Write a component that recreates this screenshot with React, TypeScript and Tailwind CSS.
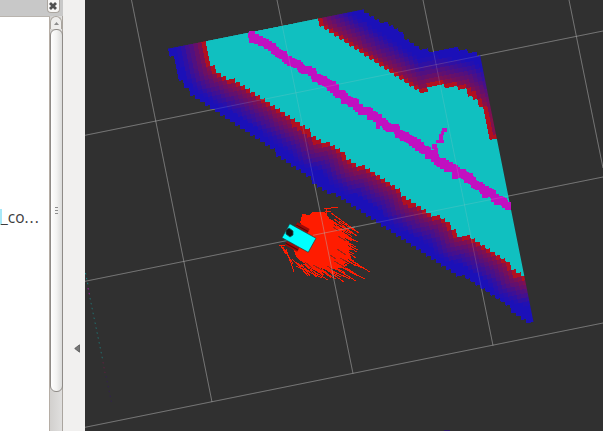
import React from "react";

type Pt = [number, number];

const CELL = 4.25;
const ANGLE = -11.35;
const RAD = (ANGLE * Math.PI) / 180;
const COS = Math.cos(RAD);
const SIN = Math.sin(RAD);
const ORIGIN: Pt = [168, 48.5];

const parse = (s: string): Pt[] => s.split(" ").map((p) => p.split(",").map(Number) as Pt);

const outer = parse(
  "167,48 172,56 175,67 180,80 192,95 210,108 223,117 270,148 283,160 303,173 320,187 340,198 373,220 400,238 417,250 433,260 453,273 470,279 487,290 507,303 513,313 525,321 535,324 482,55 475,53 457,48 447,50 433,52 422,50 413,43 400,33 383,22 369,13 360,8"
);
const free = parse(
  "205,38 208,55 213,67 220,73 232,80 247,88 260,97 270,104 287,116 300,125 310,132 317,141 332,144 342,152 348,160 358,167 367,167 380,177 400,190 407,200 427,212 442,218 451,226 458,235 470,237 490,250 507,262 515,272 525,277 499,139 487,137 489,128 488,120 482,107 473,97 463,89 442,85 430,87 423,94 407,84 392,74 370,60 350,46 330,33 312,17"
);
const path = parse(
  "251,37 263,43 277,50 287,59 303,68 327,83 345,97 360,108 378,119 397,131 417,145 437,160 453,169 473,181 487,192 507,205"
);

function inside(x: number, y: number, poly: Pt[]) {
  let r = false;
  for (let i = 0, j = poly.length - 1; i < poly.length; j = i++) {
    const [xi, yi] = poly[i];
    const [xj, yj] = poly[j];
    if (yi > y !== yj > y && x < ((xj - xi) * (y - yi)) / (yj - yi) + xi) r = !r;
  }
  return r;
}

function distance(x: number, y: number, line: Pt[]) {
  let best = 1e9;
  for (let i = 1; i < line.length; i++) {
    const [ax, ay] = line[i - 1];
    const [bx, by] = line[i];
    const dx = bx - ax;
    const dy = by - ay;
    const t = Math.max(0, Math.min(1, ((x - ax) * dx + (y - ay) * dy) / (dx * dx + dy * dy)));
    best = Math.min(best, Math.hypot(x - ax - t * dx, y - ay - t * dy));
  }
  return best;
}

const noise = (a: number, b: number) => {
  const v = Math.sin(a * 127.1 + b * 311.7) * 43758.5453;
  return v - Math.floor(v);
};

function cellsFor(size: number, pick: (x: number, y: number) => string | null) {
  const groups: Record<string, string> = {};
  for (let j = -1; j * size < 350; j++)
    for (let i = -1; i * size < 330; i++) {
      const u = (i + 0.5) * size;
      const v = (j + 0.5) * size;
      const color = pick(ORIGIN[0] + u * COS - v * SIN, ORIGIN[1] + u * SIN + v * COS);
      if (color) {
        const x = (i * size).toFixed(2);
        const y = (j * size).toFixed(2);
        groups[color] = (groups[color] || "") + `M${x} ${y}h${size}v${size}h${-size}z`;
      }
    }
  return Object.entries(groups);
}

const costs = cellsFor(CELL, (x, y) => {
  if (!inside(x, y, outer)) return null;
  if (inside(x, y, free)) return "#10c0c0";
  const d = distance(x, y, free);
  if (d < 3.6) return "#b01020";
  const t = Math.round(Math.pow(Math.min(1, d / 29), 0.8) * 20) / 20;
  return `rgb(${Math.round(162 - 135 * t)},16,${Math.round(44 + 140 * t)})`;
});

// The planned path is a run of overlapping square markers scattered about its centre line.
const marks: Pt[] = [];
path.slice(1).forEach(([bx, by], k) => {
  const [ax, ay] = path[k];
  const n = Math.round(Math.hypot(bx - ax, by - ay) / 2.1);
  for (let s = 0; s < n; s++) {
    const t = s / n;
    const off = (noise(k, s) - 0.5) * 3.4;
    marks.push([ax + (bx - ax) * t - off * 0.5, ay + (by - ay) * t + off]);
  }
});
marks.push([507.5, 206]);
const plan =
  marks.map(([x, y]) => `M${Math.round(x) - 3} ${Math.round(y) - 4}h6v8h-6z`).join("") +
  "M248 33h4v5h-4zM376 122h4v7h-4zM341 98h6v6h-6zM452 172h6v7h-6zM482 190h6v8h-6z" +
  "M432 144h5v5h-5zM434 148h4v8h-4zM436 140h8v3h-8zM439 134h4v8h-4zM442 128h5v4h-5zM441 131h3v4h-3z";

const boundary = "M166 48.9L364 9.3L372 0H480.3V56L533.5 322L160 431V60Z";
const gridPath =
  "M85 135.3L603 31M85 281.3L603 177M85 427.3L603 323M131.5 0L212 402M277 0L353 373.5M423 0L493 345.5M569 0L603 168";

const particles = Array.from({ length: 300 }, (_, k) => {
  const a = noise(k, 1) * Math.PI * 2;
  const r = Math.sqrt(noise(k, 2));
  const x = 316 + Math.cos(a) * r * 25;
  const y = 241 + Math.sin(a) * r * 27;
  const len = 8 + noise(k, 3) * 11;
  const dir = 0.55 + (noise(k, 4) - 0.5) * 0.3;
  return `M${x.toFixed(1)} ${y.toFixed(1)}l${(Math.cos(dir) * len).toFixed(1)} ${(Math.sin(dir) * len).toFixed(1)}`;
}).join("");

const tips = parse(
  "359,233 357,236 358,242 355,241 352,239 358,250 356,247 357,252 354,254 356,258 351,257 358,264 354,261 370,272 362,268 356,266 365,279 358,276 353,272 356,281 350,279 344,282 341,277 336,279 328,280 331,276 322,278 317,277"
);
const rays = tips.map(([x, y], k) => `M${x} ${y}l${-20 - (k % 3) * 3} ${-12 - (k % 2) * 2}`).join("");

function Viewport() {
  return (
    <svg className="block h-[431px] w-[518px] shrink-0 bg-[#303030]" viewBox="85 0 518 431">
      <clipPath id="edge">
        <path d={boundary} />
      </clipPath>
      <path d={gridPath} stroke="#b4b4b4" strokeOpacity=".38" />
      <g clipPath="url(#edge)">
        <g transform={`translate(${ORIGIN[0]} ${ORIGIN[1]}) rotate(${ANGLE})`} shapeRendering="crispEdges">
          {costs.map(([c, d]) => (
            <path key={c} d={d} fill={c} />
          ))}
        </g>
      </g>
      <path d={plan} fill="#c010c0" shapeRendering="crispEdges" />
      <path d={gridPath} stroke="#c8c8c8" strokeOpacity=".18" />
      <path
        d="M302 214L309 215L313 212L325 212L331 221L340 232L344 240L348 246L350 256L342 268L324 269L310 266L297 258L293 249L300 228Z"
        fill="#ff1c00"
        shapeRendering="crispEdges"
      />
      <path
        d={
          particles +
          rays +
          "M324 209l14 -2M326 208v6M319 213l12 -2M331 213l28 20M334 219l23 17M281 246l5 8M279 246l6 -1M283 247l10 17M286 249l8 23M292 259l14 14M296 262l12 14M301 264l9 12M308 266l6 9"
        }
        stroke="#ff1c00"
        strokeWidth="1"
        fill="none"
        shapeRendering="crispEdges"
      />
      <path
        d="M337 249l9 6M334 261l12 7M327 266l10 6M338 236l8 5M340 258l9 5M313 265l9 5M333 227l6 4M305 262l7 6M330 255l6 4"
        stroke="#303030"
        strokeOpacity=".5"
        strokeWidth="1"
        shapeRendering="crispEdges"
      />
      <path d="M313 235.3L355 226.8M320.2 212L333.6 278" stroke="#b4b4b4" strokeOpacity=".45" />
      <g transform="translate(299 238) rotate(29)">
        <path d="M-9 -13H5V-8H-9ZM-9 8H5V13H-9Z" fill="#9b0b08" />
        <path d="M-9 -10H5M-9 11H5" stroke="#4f0704" />
        <path d="M-15 -8H15V8H-15Z" fill="#00ffff" stroke="#163c3c" strokeWidth=".6" />
      </g>
      <path d="M286 230l3-2l4 3v4l-3 2l-4-3z" fill="#101010" stroke="#205050" strokeWidth=".8" />
      <g fill="none" strokeWidth="1" strokeDasharray="1.5 3.5">
        <path d="M85.5 273L88 285" stroke="#168484" />
        <path d="M88 288L90 297" stroke="#a018a0" />
        <path d="M90 298L102.5 359" stroke="#207070" />
        <path d="M103 362L105 373" stroke="#602040" />
        <path d="M106 376L112 405" stroke="#302050" />
      </g>
      <path d="M444 430.5h6" stroke="#2a1460" />
    </svg>
  );
}

function DisplaysPanel() {
  return (
    <div className="flex w-[50px] shrink-0 flex-col">
      <div className="h-[17px] border-b border-[#b9b4ae] bg-[#c8c8c8]" />
      <div className="flex flex-1 flex-col border-r border-[#b5ada5] bg-white pt-[190px]">
        <div className="flex h-5 items-center">
          <span className="h-4 w-[2px] shrink-0 bg-[#a8e8f8]" />
          <span className="-ml-px whitespace-nowrap text-[15.5px] leading-5 text-[#3c3c3c]">
            _co<span className="tracking-[1px]">...</span>
          </span>
        </div>
      </div>
    </div>
  );
}

function ScrollBar() {
  return (
    <div className="flex w-[13px] shrink-0 flex-col">
      <div className="flex h-4 items-start justify-center bg-[#c8c8c8]">
        <div className="-ml-[7px] flex h-[13px] w-[13px] shrink-0 items-center justify-center rounded-b-[4px] border border-t-0 border-[#aaa59f] bg-[#f7f6f5]">
          <svg className="h-[8px] w-[8px]" viewBox="0 0 8 8">
            <path d="M1 1L7 7M7 1L1 7" stroke="#505050" strokeWidth="2.8" />
          </svg>
        </div>
      </div>
      <div className="flex flex-1 flex-col border-r border-[#aaa59f] bg-gradient-to-r from-[#d2d0ce] to-[#e0dfde]">
        <div className="flex h-[13px] items-center justify-center rounded-t-[6px] border border-b-0 border-[#aaa59f] bg-[#eeedec]">
          <svg className="h-[3px] w-[5px]" viewBox="0 0 5 3">
            <path d="M0 3L2.5 0L5 3Z" fill="#8c8c8c" />
          </svg>
        </div>
        <div className="flex h-[363px] w-[13px] flex-col items-center justify-center gap-[2px] rounded-[6px] border border-[#8f8b87] bg-gradient-to-r from-white via-[#f3f3f2] to-[#dcdcdb]">
          <i className="h-px w-[3px] bg-[#8e8e8e]" />
          <i className="h-px w-[3px] bg-[#8e8e8e]" />
          <i className="h-px w-[3px] bg-[#8e8e8e]" />
        </div>
      </div>
    </div>
  );
}

export default function App() {
  return (
    <main className="flex h-[431px] w-[603px] overflow-hidden bg-[#f1f0ef] font-['Open_Sans',sans-serif]">
      <DisplaysPanel />
      <ScrollBar />
      <div className="flex w-[22px] shrink-0 items-start justify-end pr-[5px] pt-[344px]">
        <svg className="h-[9px] w-[6px]" viewBox="0 0 6 9">
          <path d="M5.5 .8V8.2L.7 4.5Z" fill="#777" stroke="#555" strokeWidth=".8" />
        </svg>
      </div>
      <Viewport />
    </main>
  );
}
